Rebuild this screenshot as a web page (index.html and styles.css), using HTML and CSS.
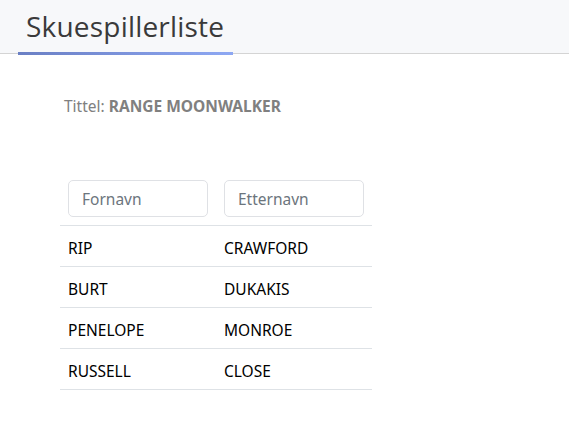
FILE: index.html
```html
<!DOCTYPE html>
<html lang="no">
<head>
<meta charset="utf-8">
<title>Skuespillerliste</title>
<link rel="stylesheet" href="styles.css">
</head>
<body>
<header class="topbar">
  <div class="tab"><h1 class="tab-title">Skuespillerliste</h1></div>
</header>
<main class="content">
  <p class="film">Tittel: <strong>RANGE MOONWALKER</strong></p>
  <table class="actors">
    <thead>
      <tr>
        <th><input class="filter" type="text" placeholder="Fornavn"></th>
        <th><input class="filter" type="text" placeholder="Etternavn"></th>
      </tr>
    </thead>
    <tbody>
      <tr><td>RIP</td><td>CRAWFORD</td></tr>
      <tr><td>BURT</td><td>DUKAKIS</td></tr>
      <tr><td>PENELOPE</td><td>MONROE</td></tr>
      <tr><td>RUSSELL</td><td>CLOSE</td></tr>
    </tbody>
  </table>
</main>
</body>
</html>
```
FILE: styles.css
```css
html, body {
  margin: 0;
  padding: 0;
  background: #fff;
}
body {
  font-family: "Noto Sans", "Open Sans", sans-serif;
  color: #000;
}
.topbar {
  background: #f7f8fa;
  border-bottom: 1px solid #d4d4d4;
  height: 53px;
  display: flex;
  align-items: flex-end;
  padding-left: 18px;
}
.tab {
  width: 215px;
  height: 53px;
  box-sizing: border-box;
  border-bottom: 3px solid transparent;
  border-image: linear-gradient(90deg, #6a7fc4, #8ea8f3) 1;
  margin-bottom: -2px;
  padding-left: 8px;
  display: flex;
  align-items: center;
}
.tab-title {
  margin: 0;
  font-family: "Open Sans", sans-serif;
  font-weight: 400;
  font-size: 28px;
  color: #3a3a3a;
  letter-spacing: 0.2px;
  line-height: 1;
  padding-bottom: 2px;
  white-space: nowrap;
}
.content {
  padding: 0 0 0 60px;
}
.film {
  margin: 42px 0 0 4px;
  font-size: 15.5px;
  line-height: 20px;
  color: #808080;
}
.film strong {
  font-weight: 700;
}
.actors {
  margin-top: 56px;
  border-collapse: collapse;
  width: 312px;
  table-layout: fixed;
}
.actors th, .actors td {
  padding: 8px;
  text-align: left;
  border-bottom: 1px solid #dee2e6;
  font-size: 15.5px;
  line-height: 24px;
  font-weight: 400;
}
.actors td {
  padding: 10px 8px 6px;
}
.filter {
  width: 140px;
  height: 37px;
  box-sizing: border-box;
  border: 1px solid #dfe1e5;
  border-radius: 5px;
  padding: 1px 13px 0;
  font-family: "Noto Sans", "Open Sans", sans-serif;
  font-size: 15.5px;
  color: #555;
  outline: none;
  display: block;
}
.filter::placeholder {
  color: #6c757d;
}
```
